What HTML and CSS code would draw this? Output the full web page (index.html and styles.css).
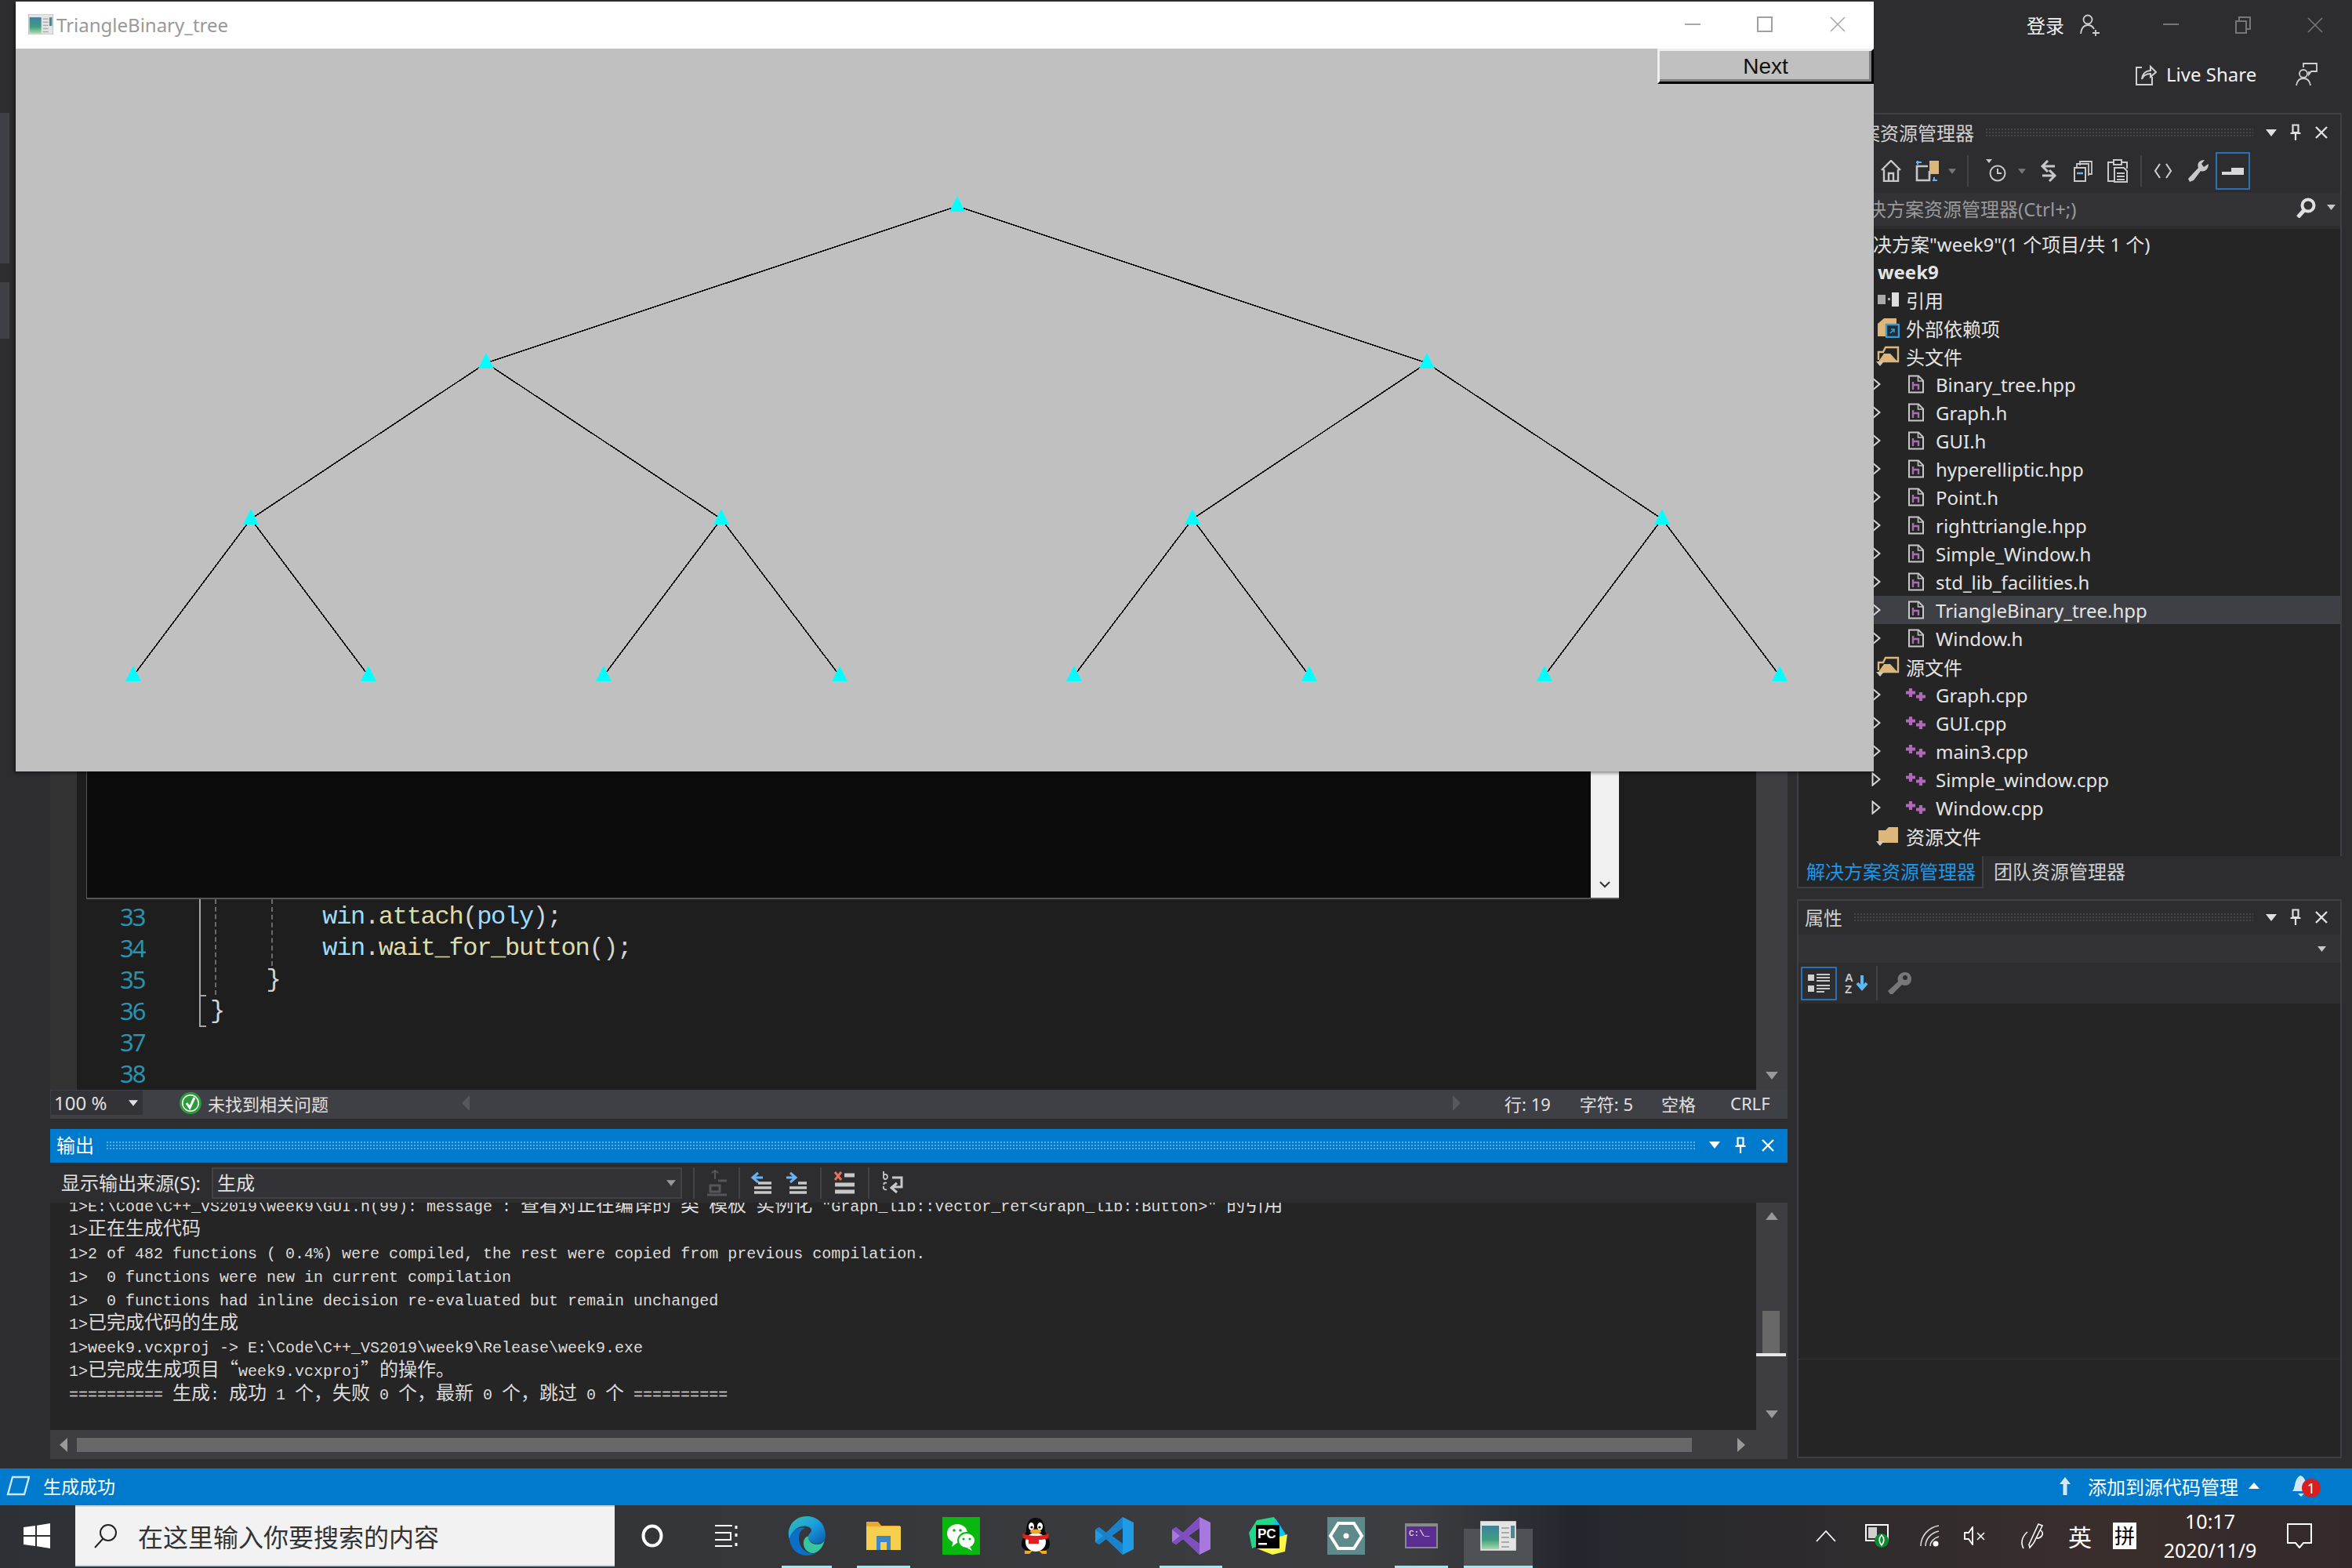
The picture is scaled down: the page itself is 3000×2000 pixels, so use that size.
FILE: index.html
```html
<!DOCTYPE html>
<html lang="zh-CN">
<head>
    <meta charset="UTF-8">
    <title>TriangleBinary_tree</title>
    <link rel="stylesheet" href="styles.css">
</head>
<body>
    <svg class="defs" width="0" height="0">
        <defs>
            <linearGradient id="appGrad" x1="0" y1="0" x2="0" y2="1">
                <stop offset="0" stop-color="#3f7f9f"/>
                <stop offset="0.6" stop-color="#3f9f80"/>
                <stop offset="1" stop-color="#a8d8a8"/>
            </linearGradient>
            <linearGradient id="edgeGrad" x1="0" y1="0" x2="1" y2="1">
                <stop offset="0" stop-color="#35c1a8"/>
                <stop offset="0.5" stop-color="#1b9de2"/>
                <stop offset="1" stop-color="#0c59a4"/>
            </linearGradient>
            <symbol id="appIcon" viewBox="0 0 46 38">
                <rect x="0" y="0" width="46" height="38" fill="#e4e4e4" stroke="#a8a8a8"/>
                <rect x="2" y="6" width="22" height="30" fill="url(#appGrad)"/>
                <rect x="27" y="8" width="10" height="2" fill="#aaa"/>
                <rect x="27" y="14" width="10" height="2" fill="#aaa"/>
                <rect x="27" y="20" width="10" height="2" fill="#aaa"/>
                <rect x="27" y="26" width="10" height="2" fill="#aaa"/>
                <rect x="27" y="32" width="10" height="2" fill="#aaa"/>
                <rect x="39" y="6" width="5" height="16" fill="#4a8a90"/>
            </symbol>
            <symbol id="fileH" viewBox="0 0 24 24">
                <path d="M3 1.5H15L21 7.5V22.5H3Z" fill="#252526" stroke="#c8c8c8" stroke-width="2"/>
                <path d="M14.5 2V8H21" fill="none" stroke="#c8c8c8" stroke-width="1.5"/>
                <path d="M8 9V19M8 13H15V19" fill="none" stroke="#a86fb0" stroke-width="2.4"/>
            </symbol>
            <symbol id="fileCpp" viewBox="0 0 26 16">
                <path d="M6 0V11M0 5.500H12" stroke="#b068b8" stroke-width="4.2" fill="none"/>
                <path d="M19 5V16M13 10.500H25" stroke="#b068b8" stroke-width="4.2" fill="none"/>
            </symbol>
            <symbol id="arrowOpen" viewBox="0 0 12 18">
                <path d="M1.5 1.5L10.5 9L1.5 16.5Z" fill="none" stroke="#d8d8d8" stroke-width="2"/>
            </symbol>
            <symbol id="folderOpen" viewBox="0 0 30 26">
                <path d="M3 18V8L9 8L12 2H28V20H6" fill="none" stroke="#dcb67a" stroke-width="2.4"/>
                <path d="M3 20L10 10H18L28 21H6Z" fill="#dcb67a"/>
                <path d="M0 20H10L5 26Z" fill="#c8c8c8"/>
            </symbol>
            <symbol id="folderClosed" viewBox="0 0 30 26">
                <path d="M3 6H12L16 2H28V22H3Z" fill="#dcb67a"/>
                <path d="M0 20H10L5 26Z" fill="#c8c8c8"/>
            </symbol>
            <symbol id="pin" viewBox="0 0 16 22">
                <path d="M4.5 1.5H11.5V11H4.5ZM1.5 12H14.5M8 12V21" fill="none" stroke="currentColor" stroke-width="2.2"/>
            </symbol>
            <symbol id="closeX" viewBox="0 0 18 18">
                <path d="M2 2L16 16M16 2L2 16" stroke="currentColor" stroke-width="2.4" fill="none"/>
            </symbol>
            <symbol id="triDown" viewBox="0 0 14 9">
                <path d="M0 0H14L7 9Z" fill="currentColor"/>
            </symbol>
        </defs>
    </svg>

    <div class="ide">
        <header class="ide-top">
            <div class="top-row">
                <span class="login">登录</span>
                <svg class="i-person" width="26" height="28" viewBox="0 0 26 28"><circle cx="10" cy="7" r="5.5" fill="none" stroke="#d0d0d0" stroke-width="1.8"/><path d="M1 25C2 16 6 14 10 14C13 14 16 15 18 19M20 20V28M16 24H25" fill="none" stroke="#d0d0d0" stroke-width="1.8"/></svg>
                <svg class="i-wmin" width="20" height="3" viewBox="0 0 20 3"><rect width="20" height="2" fill="#77777b"/></svg>
                <svg class="i-wrestore" width="20" height="22" viewBox="0 0 20 22"><path d="M1 6H14V21H1ZM5 6V1H19V16H14" fill="none" stroke="#77777b" stroke-width="2"/></svg>
                <svg class="i-wclose" width="20" height="20" viewBox="0 0 20 20"><path d="M1 1L19 19M19 1L1 19" stroke="#77777b" stroke-width="1.6" fill="none"/></svg>
            </div>
            <div class="top-row top-row-share">
                <svg class="i-share" width="28" height="28" viewBox="0 0 28 28"><path d="M9 5H2V27H22V17M9 20C10 12 15 9 20 9V4L27 11L20 17V13C15 13 11 15 9 20Z" fill="none" stroke="#d0d0d0" stroke-width="2"/></svg>
                <span class="share-text">Live Share</span>
                <svg class="i-feedback" width="28" height="30" viewBox="0 0 28 30"><circle cx="10" cy="14" r="5" fill="none" stroke="#d0d0d0" stroke-width="1.8"/><path d="M1 29C2 22 6 20 10 20C14 20 18 22 19 29M10 6V1H27V11H20L17 15V11" fill="none" stroke="#d0d0d0" stroke-width="1.8"/></svg>
            </div>
        </header>

        <div class="ide-main">
            <div class="left-strip">
                <div class="strip-tab strip-tab-long"></div>
                <div class="strip-tab strip-tab-short"></div>
            </div>

            <div class="center">
                <div class="editor">
                    <div class="gutter"></div>
                    <div class="code-col">
                        <div class="console">
                            <div class="console-scroll">
                                <svg width="14" height="9" viewBox="0 0 14 9"><path d="M1 1L7 7L13 1" fill="none" stroke="#333" stroke-width="2"/></svg>
                            </div>
                        </div>
                        <div class="code-lines">
                            <div class="guide guide-bar"></div>
                            <div class="guide guide-tick1"></div>
                            <div class="guide guide-tick2"></div>
                            <div class="guide guide-dash1"></div>
                            <div class="guide guide-dash2"></div>
                            <div class="line"><span class="ln">33</span><code>        <b class="v">win</b>.<b class="f">attach</b>(<b class="v">poly</b>);</code></div>
                            <div class="line"><span class="ln">34</span><code>        <b class="v">win</b>.<b class="f">wait_for_button</b>();</code></div>
                            <div class="line"><span class="ln">35</span><code>    }</code></div>
                            <div class="line"><span class="ln">36</span><code>}</code></div>
                            <div class="line"><span class="ln">37</span><code></code></div>
                            <div class="line"><span class="ln">38</span><code></code></div>
                        </div>
                    </div>
                    <div class="vscroll vscroll-editor">
                        <svg class="scroll-arrow" width="16" height="10"><use href="#triDown"/></svg>
                    </div>
                </div>

                <div class="editor-status">
                    <div class="zoom-box">100 %<svg class="zoom-caret" width="12" height="8"><use href="#triDown"/></svg></div>
                    <svg class="i-check" width="28" height="28" viewBox="0 0 28 28"><circle cx="14" cy="14" r="12.5" fill="#fff" stroke="#2f9a3a" stroke-width="3"/><circle cx="14" cy="14" r="9.5" fill="#2f9a3a"/><path d="M9 14L13 20L19 7" fill="none" stroke="#fff" stroke-width="3"/></svg>
                    <span class="no-issue">未找到相关问题</span>
                    <svg class="i-hleft" width="10" height="20" viewBox="0 0 10 20"><path d="M10 0V20L0 10Z" fill="#58585c"/></svg>
                    <svg class="i-hright" width="10" height="20" viewBox="0 0 10 20"><path d="M0 0V20L10 10Z" fill="#58585c"/></svg>
                    <span class="st st-line">行: 19</span>
                    <span class="st st-char">字符: 5</span>
                    <span class="st st-space">空格</span>
                    <span class="st st-crlf">CRLF</span>
                </div>

                <section class="output">
                    <div class="output-head">
                        <span class="output-title">输出</span>
                        <div class="dots dots-blue"></div>
                        <svg class="head-tri" width="14" height="9"><use href="#triDown"/></svg>
                        <svg class="head-pin" width="16" height="22"><use href="#pin"/></svg>
                        <svg class="head-x" width="18" height="18"><use href="#closeX"/></svg>
                    </div>
                    <div class="output-tools">
                        <span class="src-label">显示输出来源(S):</span>
                        <div class="src-combo">生成<svg class="src-caret" width="12" height="8"><use href="#triDown"/></svg></div>
                        <div class="tsep tsep-a"></div>
                        <svg class="ot ot-1" width="28" height="34" viewBox="0 0 28 34"><path d="M12 1V12M8 4L12 1L16 4" fill="none" stroke="#55555a" stroke-width="2"/><path d="M16 14H27M6 20H18V28H6ZM2 32H27" fill="none" stroke="#55555a" stroke-width="3"/></svg>
                        <div class="tsep tsep-b"></div>
                        <svg class="ot ot-2" width="28" height="30" viewBox="0 0 28 30"><path d="M10 2L3 8L10 14M3 8H16" fill="none" stroke="#6cb2f0" stroke-width="3"/><path d="M10 15H27M5 21H27M5 27H27" stroke="#c8c8c8" stroke-width="3.4"/></svg>
                        <svg class="ot ot-3" width="28" height="30" viewBox="0 0 28 30"><path d="M6 2L13 8L6 14M13 8H1" fill="none" stroke="#6cb2f0" stroke-width="3"/><path d="M16 15H27M5 21H27M5 27H27" stroke="#c8c8c8" stroke-width="3.4"/></svg>
                        <div class="tsep tsep-c"></div>
                        <svg class="ot ot-4" width="28" height="32" viewBox="0 0 28 32"><path d="M2 2L10 12M10 2L2 12" stroke="#e07060" stroke-width="3"/><path d="M14 6H27M2 18H27M2 27H27" stroke="#c8c8c8" stroke-width="5"/></svg>
                        <div class="tsep tsep-d"></div>
                        <svg class="ot ot-5" width="30" height="32" viewBox="0 0 30 32"><path d="M3 1V10M3 6C5 4 8 5 8 8C8 11 5 12 3 10M4 18C2 16 5 15 7 16M7 24C5 25 2 24 3 20" fill="none" stroke="#c8c8c8" stroke-width="1.8"/><path d="M14 9H26V21H14M20 16L13 22L20 28" fill="none" stroke="#c8c8c8" stroke-width="3"/></svg>
                    </div>
                    <div class="output-body">
                        <div class="output-text">
                            <div class="out-cut">
<div class="oline">1&gt;E:\Code\C++_VS2019\week9\GUI.h(99): message : <i>查看对正在编译的</i> <i>类</i> <i>模板</i> <i>实例化</i> "Graph_lib::Vector_ref&lt;Graph_lib::Button&gt;" <i>的引用</i></div>
<div class="oline">1&gt;<i>正在生成代码</i></div>
<div class="oline">1&gt;2 of 482 functions ( 0.4%) were compiled, the rest were copied from previous compilation.</div>
<div class="oline">1&gt;  0 functions were new in current compilation</div>
<div class="oline">1&gt;  0 functions had inline decision re-evaluated but remain unchanged</div>
<div class="oline">1&gt;<i>已完成代码的生成</i></div>
<div class="oline">1&gt;week9.vcxproj -&gt; E:\Code\C++_VS2019\week9\Release\week9.exe</div>
<div class="oline">1&gt;<i>已完成生成项目“</i>week9.vcxproj<i>”的操作。</i></div>
<div class="oline">========== <i>生成</i>: <i>成功</i> 1 <i>个，失败</i> 0 <i>个，最新</i> 0 <i>个，跳过</i> 0 <i>个</i> ==========</div>
                            </div>
                        </div>
                        <div class="vscroll vscroll-output">
                            <svg class="scroll-up" width="16" height="10"><use href="#triDown"/></svg>
                            <div class="vthumb"></div>
                            <div class="vthumb-line"></div>
                            <svg class="scroll-down" width="16" height="10"><use href="#triDown"/></svg>
                        </div>
                    </div>
                    <div class="hscroll">
                        <svg class="hs-left" width="10" height="18" viewBox="0 0 10 18"><path d="M10 0V18L0 9Z" fill="#999"/></svg>
                        <div class="hthumb"></div>
                        <svg class="hs-right" width="10" height="18" viewBox="0 0 10 18"><path d="M0 0V18L10 9Z" fill="#999"/></svg>
                    </div>
                </section>
            </div>

            <aside class="side">
                <section class="panel panel-tree">
                    <div class="panel-head">
                        <span class="panel-title panel-title-tree">解决方案资源管理器</span>
                        <div class="dots dots-gray"></div>
                        <svg class="head-tri" width="14" height="9"><use href="#triDown"/></svg>
                        <svg class="head-pin" width="16" height="22"><use href="#pin"/></svg>
                        <svg class="head-x" width="18" height="18"><use href="#closeX"/></svg>
                    </div>
                    <div class="tree-tools">
                        <svg class="tb tb-home" width="26" height="28" viewBox="0 0 26 28"><path d="M1 13L13 1L25 13M4 12V27H22V12M10 27V17H16V27" fill="none" stroke="#c8c8c8" stroke-width="2.4"/></svg>
                        <svg class="tb tb-sync" width="30" height="28" viewBox="0 0 30 28"><path d="M16 8H2V26H18V14" fill="none" stroke="#c8c8c8" stroke-width="2.6"/><path d="M18 1H30V18H18Z" fill="#dcb67a"/><path d="M3 6V1M1 3H8" stroke="#6cb2f0" stroke-width="2"/><path d="M24 22V27M22 26H28" stroke="#6cb2f0" stroke-width="2"/></svg>
                        <svg class="tb tb-drop1" width="10" height="7" color="#77777b"><use href="#triDown"/></svg>
                        <div class="tb-sep tb-sep1"></div>
                        <svg class="tb tb-clock" width="28" height="30" viewBox="0 0 28 30"><path d="M0 0H8L4 5Z" fill="#c8c8c8"/><circle cx="15" cy="18" r="9.5" fill="none" stroke="#c8c8c8" stroke-width="2"/><path d="M15 12V18H20" fill="none" stroke="#c8c8c8" stroke-width="2"/></svg>
                        <svg class="tb tb-drop2" width="10" height="7" color="#77777b"><use href="#triDown"/></svg>
                        <svg class="tb tb-arrows" width="24" height="28" viewBox="0 0 24 28"><path d="M11 1L4 8L11 15M4 8H20M13 13L20 20L13 27M20 20H4" fill="none" stroke="#c8c8c8" stroke-width="3"/></svg>
                        <svg class="tb tb-copy" width="24" height="28" viewBox="0 0 24 28"><path d="M8 7V2H23V18H19M4 9V5H19V20" fill="none" stroke="#c8c8c8" stroke-width="1.8"/><path d="M1 10H15V27H1Z" fill="#252526" stroke="#c8c8c8" stroke-width="2"/><path d="M4 17H12" stroke="#6cb2f0" stroke-width="2.5"/></svg>
                        <svg class="tb tb-doc" width="28" height="30" viewBox="0 0 28 30"><path d="M8 4H2V28H12M20 4H26V12" fill="none" stroke="#c8c8c8" stroke-width="2"/><path d="M9 1H19V7H9ZM10 11H22L26 15V29H10Z" fill="#252526" stroke="#c8c8c8" stroke-width="2"/><path d="M13 18H23M13 22H23M13 26H23" stroke="#c8c8c8" stroke-width="2"/></svg>
                        <div class="tb-sep tb-sep2"></div>
                        <svg class="tb tb-code" width="24" height="22" viewBox="0 0 24 22"><path d="M8 2L2 11L8 20M16 2L22 11L16 20" fill="none" stroke="#c8c8c8" stroke-width="2.2"/></svg>
                        <svg class="tb tb-wrench" width="28" height="30" viewBox="0 0 28 30"><path d="M3 29L1 25L14 11C12 6 15 1 22 1L18 6L21 10L27 6C27 13 22 17 17 15L8 27Z" fill="#c8c8c8"/></svg>
                        <div class="tb-focus"><svg width="28" height="9" viewBox="0 0 28 9"><path d="M0 5H12V0H28V9H0Z" fill="#d8d8d8"/></svg></div>
                    </div>
                    <div class="tree-search">
                        <span class="search-hint">搜索解决方案资源管理器(Ctrl+;)</span>
                        <svg class="i-find" width="28" height="26" viewBox="0 0 28 26"><circle cx="16" cy="10" r="7.5" fill="none" stroke="#e0e0e0" stroke-width="4"/><path d="M11 16L3 25" stroke="#e0e0e0" stroke-width="5"/></svg>
                        <svg class="find-drop" width="11" height="7" color="#c8c8c8"><use href="#triDown"/></svg>
                    </div>
                    <div class="tree">
                        <div class="row row-solution">解决方案"week9"(1 个项目/共 1 个)</div>
                        <div class="row row-project">week9</div>
                        <div class="row row-folder"><svg class="ficon" width="30" height="22" viewBox="0 0 30 22"><rect x="2" y="5" width="10" height="12" fill="#aaa"/><rect x="15" y="9" width="3" height="3" fill="#aaa"/><rect x="20" y="2" width="9" height="18" fill="#ddd"/></svg><span>引用</span></div>
                        <div class="row row-folder"><svg class="ficon" width="30" height="26" viewBox="0 0 30 26"><path d="M2 8L10 1H26V24H2Z" fill="#dcb67a"/><rect x="13" y="9" width="16" height="16" fill="#1f2f3a" stroke="#3a9bd8" stroke-width="2.4"/><path d="M18 20L23 15M19 15H23V19" stroke="#3a9bd8" stroke-width="1.6" fill="none"/></svg><span>外部依赖项</span></div>
                        <div class="row row-folder"><svg class="ficon" width="30" height="26"><use href="#folderOpen"/></svg><span>头文件</span></div>
                        <div class="row row-file"><svg class="tw" width="12" height="18"><use href="#arrowOpen"/></svg><svg class="fi" width="24" height="24"><use href="#fileH"/></svg><span>Binary_tree.hpp</span></div>
                        <div class="row row-file"><svg class="tw" width="12" height="18"><use href="#arrowOpen"/></svg><svg class="fi" width="24" height="24"><use href="#fileH"/></svg><span>Graph.h</span></div>
                        <div class="row row-file"><svg class="tw" width="12" height="18"><use href="#arrowOpen"/></svg><svg class="fi" width="24" height="24"><use href="#fileH"/></svg><span>GUI.h</span></div>
                        <div class="row row-file"><svg class="tw" width="12" height="18"><use href="#arrowOpen"/></svg><svg class="fi" width="24" height="24"><use href="#fileH"/></svg><span>hyperelliptic.hpp</span></div>
                        <div class="row row-file"><svg class="tw" width="12" height="18"><use href="#arrowOpen"/></svg><svg class="fi" width="24" height="24"><use href="#fileH"/></svg><span>Point.h</span></div>
                        <div class="row row-file"><svg class="tw" width="12" height="18"><use href="#arrowOpen"/></svg><svg class="fi" width="24" height="24"><use href="#fileH"/></svg><span>righttriangle.hpp</span></div>
                        <div class="row row-file"><svg class="tw" width="12" height="18"><use href="#arrowOpen"/></svg><svg class="fi" width="24" height="24"><use href="#fileH"/></svg><span>Simple_Window.h</span></div>
                        <div class="row row-file"><svg class="tw" width="12" height="18"><use href="#arrowOpen"/></svg><svg class="fi" width="24" height="24"><use href="#fileH"/></svg><span>std_lib_facilities.h</span></div>
                        <div class="row row-file row-active"><svg class="tw" width="12" height="18"><use href="#arrowOpen"/></svg><svg class="fi" width="24" height="24"><use href="#fileH"/></svg><span>TriangleBinary_tree.hpp</span></div>
                        <div class="row row-file"><svg class="tw" width="12" height="18"><use href="#arrowOpen"/></svg><svg class="fi" width="24" height="24"><use href="#fileH"/></svg><span>Window.h</span></div>
                        <div class="row row-folder"><svg class="ficon" width="30" height="26"><use href="#folderOpen"/></svg><span>源文件</span></div>
                        <div class="row row-file"><svg class="tw" width="12" height="18"><use href="#arrowOpen"/></svg><svg class="fi fi-cpp" width="26" height="16"><use href="#fileCpp"/></svg><span>Graph.cpp</span></div>
                        <div class="row row-file"><svg class="tw" width="12" height="18"><use href="#arrowOpen"/></svg><svg class="fi fi-cpp" width="26" height="16"><use href="#fileCpp"/></svg><span>GUI.cpp</span></div>
                        <div class="row row-file"><svg class="tw" width="12" height="18"><use href="#arrowOpen"/></svg><svg class="fi fi-cpp" width="26" height="16"><use href="#fileCpp"/></svg><span>main3.cpp</span></div>
                        <div class="row row-file"><svg class="tw" width="12" height="18"><use href="#arrowOpen"/></svg><svg class="fi fi-cpp" width="26" height="16"><use href="#fileCpp"/></svg><span>Simple_window.cpp</span></div>
                        <div class="row row-file"><svg class="tw" width="12" height="18"><use href="#arrowOpen"/></svg><svg class="fi fi-cpp" width="26" height="16"><use href="#fileCpp"/></svg><span>Window.cpp</span></div>
                        <div class="row row-folder"><svg class="ficon" width="30" height="26"><use href="#folderClosed"/></svg><span>资源文件</span></div>
                    </div>
                </section>
                <div class="side-tabs">
                    <span class="side-tab side-tab-on">解决方案资源管理器</span>
                    <span class="side-tab">团队资源管理器</span>
                </div>

                <section class="panel panel-props">
                    <div class="panel-head panel-head-props">
                        <span class="panel-title">属性</span>
                        <div class="dots dots-gray"></div>
                        <svg class="head-tri" width="14" height="9"><use href="#triDown"/></svg>
                        <svg class="head-pin" width="16" height="22"><use href="#pin"/></svg>
                        <svg class="head-x" width="18" height="18"><use href="#closeX"/></svg>
                    </div>
                    <div class="props-combo"><svg width="11" height="7" color="#c8c8c8"><use href="#triDown"/></svg></div>
                    <div class="props-tools">
                        <div class="pt-on">
                            <svg width="30" height="26" viewBox="0 0 30 26"><rect x="1" y="2" width="8" height="8" fill="#d0d0d0"/><rect x="1" y="16" width="8" height="8" fill="#d0d0d0"/><path d="M12 2H29M12 6H29M12 10H29M12 16H29M12 20H29M12 24H22" stroke="#c8c8c8" stroke-width="1.8"/></svg>
                        </div>
                        <svg class="pt-az" width="30" height="28" viewBox="0 0 30 28"><text x="0" y="12" class="az-text">A</text><text x="0" y="27" class="az-text">Z</text><path d="M22 4V20M16 14L22 21L28 14" fill="none" stroke="#5cb8f5" stroke-width="4"/></svg>
                        <div class="tb-sep pt-sep"></div>
                        <svg class="pt-key" width="32" height="30" viewBox="0 0 32 30"><path d="M4 29L1 25L14 13C12 6 17 1 23 1C28 1 31 5 31 10C31 16 25 20 19 17L7 29Z" fill="#77777b"/><circle cx="23" cy="8" r="3" fill="#2d2d30"/></svg>
                    </div>
                    <div class="props-grid"></div>
                    <div class="props-desc"></div>
                </section>
            </aside>
        </div>

        <div class="statusbar">
            <svg class="i-build" width="30" height="26" viewBox="0 0 30 26"><path d="M8 2H29L23 24H2Z" fill="none" stroke="#cfe8f8" stroke-width="2.4"/></svg>
            <span class="build-ok">生成成功</span>
            <svg class="i-up" width="16" height="24" viewBox="0 0 16 24"><path d="M8 1L15 10H10.5V24H5.5V10H1Z" fill="#d5e8f5"/></svg>
            <span class="scm">添加到源代码管理</span>
            <svg class="scm-tri" width="14" height="8" viewBox="0 0 14 8"><path d="M0 8H14L7 0Z" fill="#fff"/></svg>
            <div class="bell">
                <svg width="26" height="30" viewBox="0 0 26 30"><path d="M2 22C6 18 4 6 12 2C20 4 19 16 24 22ZM9 25H17L13 29Z" fill="#d5e8f5"/></svg>
                <span class="bell-badge">1</span>
            </div>
        </div>
    </div>

    <footer class="taskbar">
        <svg class="tk-start" width="34" height="32" viewBox="0 0 34 32"><path d="M0 5L15 3V15H0ZM17 2.7L34 0V15H17ZM0 17H15V29L0 27ZM17 17H34V32L17 29.3Z" fill="#fff"/></svg>
        <div class="tk-search">
            <svg width="30" height="32" viewBox="0 0 30 32"><circle cx="18" cy="12" r="10" fill="none" stroke="#222" stroke-width="2"/><path d="M11 20L1 31" stroke="#222" stroke-width="2"/></svg>
            <span>在这里输入你要搜索的内容</span>
        </div>
        <svg class="tk-cortana" width="28" height="30" viewBox="0 0 28 30"><ellipse cx="14" cy="15" rx="11.5" ry="12.5" fill="none" stroke="#fff" stroke-width="4"/></svg>
        <svg class="tk-view" width="30" height="30" viewBox="0 0 30 30"><path d="M0 2H22M0 28H22M0 11H20V20H0" fill="none" stroke="#fff" stroke-width="2"/><path d="M27 2V6M27 12V16M27 24V28" stroke="#fff" stroke-width="3"/></svg>
        <div class="tk-app tk-edge tk-open">
            <svg width="48" height="50" viewBox="0 0 48 50"><path d="M24 0C38 0 48 10 48 25C48 30 44 35 38 35C30 35 26 31 26 26C26 22 30 21 30 18C30 13 20 10 12 15C6 19 3 25 2 30C-3 14 8 0 24 0Z" fill="url(#edgeGrad)"/><path d="M2 30C4 18 14 13 22 15C14 18 12 28 16 37C19 44 27 49 35 47C30 50 25 50 22 50C11 49 4 41 2 30Z" fill="#0c6ec4"/><path d="M26 26C26 33 32 36 38 36C42 36 46 33 47 30C45 40 38 47 32 47C24 47 19 40 20 32C21 28 24 25 26 26Z" fill="#38c6a0"/></svg>
        </div>
        <div class="tk-app tk-files tk-open">
            <svg width="46" height="36" viewBox="0 0 46 36"><path d="M1 0H16L20 5H44V36H1Z" fill="#e9a92c"/><rect x="1" y="6" width="44" height="30" fill="#f6cf4e"/><rect x="14" y="18" width="18" height="18" fill="#3d87c8"/><rect x="19" y="26" width="8" height="10" fill="#f6cf4e"/></svg>
        </div>
        <div class="tk-app tk-wechat">
            <svg width="48" height="48" viewBox="0 0 48 48"><rect width="48" height="48" fill="#09b80f"/><ellipse cx="19" cy="21" rx="13" ry="12" fill="#fff"/><path d="M14 30L12 38L20 32Z" fill="#fff"/><ellipse cx="31" cy="30" rx="11" ry="10" fill="#fff" stroke="#09b80f" stroke-width="2"/><path d="M35 38L38 43L31 39Z" fill="#fff"/><circle cx="15" cy="17" r="1.8" fill="#09b80f"/><circle cx="23" cy="17" r="1.8" fill="#09b80f"/><circle cx="27" cy="28" r="1.6" fill="#09b80f"/><circle cx="35" cy="28" r="1.6" fill="#09b80f"/></svg>
        </div>
        <div class="tk-app tk-qq">
            <svg width="40" height="46" viewBox="0 0 40 46"><path d="M20 0C30 0 32 10 32 18C36 24 40 32 37 38C34 44 6 44 3 38C0 32 4 24 8 18C8 10 10 0 20 0Z" fill="#0a0a0a"/><ellipse cx="20" cy="31" rx="13" ry="12" fill="#fff"/><ellipse cx="14.500" cy="11" rx="3.5" ry="5" fill="#fff"/><ellipse cx="25.500" cy="11" rx="3.5" ry="5" fill="#fff"/><circle cx="15" cy="12" r="1.6" fill="#000"/><circle cx="25" cy="12" r="1.6" fill="#000"/><ellipse cx="20" cy="17.500" rx="7" ry="3" fill="#f2a81d"/><path d="M3 20C12 24 28 24 37 20L36 26C30 28 26 28 24 28V33H11V28C8 27 5 27 4 26Z" fill="#e01f1f"/><path d="M6 42H16L12 46H6ZM24 42H34V46H28Z" fill="#f2a81d"/></svg>
        </div>
        <div class="tk-app tk-code">
            <svg width="49" height="48" viewBox="0 0 49 48"><path d="M35 0L49 7V41L35 48L14 28L5 35L0 32V16L5 13L14 20ZM35 14L21 24L35 34Z" fill="#1f9ce8" fill-rule="evenodd"/><path d="M35 0V14L21 24L35 34V48L14 28L5 35L0 32L10 24L0 16L5 13L14 20Z" fill="#1a82c8"/></svg>
        </div>
        <div class="tk-app tk-vs tk-open">
            <svg width="49" height="48" viewBox="0 0 49 48"><path d="M35 0L49 7V41L35 48L14 28L5 35L0 32V16L5 13L14 20ZM35 14L21 24L35 34Z" fill="#a678e0" fill-rule="evenodd"/><path d="M35 0V14L21 24L35 34V48L14 28L5 35L0 32L10 24L0 16L5 13L14 20Z" fill="#7f4fc0"/></svg>
        </div>
        <div class="tk-app tk-py">
            <svg width="49" height="48" viewBox="0 0 49 48"><path d="M10 4L32 0L36 6L30 30L4 40L0 20Z" fill="#21d789"/><path d="M34 2L47 22L40 32L28 20Z" fill="#07c3f2"/><path d="M10 40L30 28L49 22L46 44L30 48Z" fill="#fcf84a"/><rect x="9" y="10" width="30" height="30" fill="#000"/><text x="11" y="27" class="pc-text">PC</text><rect x="12" y="33" width="11" height="2.500" fill="#fff"/></svg>
        </div>
        <div class="tk-app tk-hex">
            <svg width="48" height="48" viewBox="0 0 48 48"><rect width="48" height="48" fill="#5f8a8b"/><path d="M14 8H34L44 24L34 40H14L4 24Z" fill="none" stroke="#fff" stroke-width="4"/><circle cx="24" cy="24" r="3.5" fill="#fff"/></svg>
        </div>
        <div class="tk-app tk-cmd tk-open">
            <svg width="42" height="32" viewBox="0 0 42 32"><rect width="42" height="32" fill="#8a8a8a"/><rect x="2" y="4" width="38" height="26" fill="#5a2d91"/><text x="5" y="16" class="cmd-text">C:\_</text></svg>
        </div>
        <div class="tk-app tk-win tk-open tk-active">
            <svg class="tk-thumb" width="46" height="38"><use href="#appIcon"/></svg>
        </div>

        <div class="tray">
            <svg class="tr tr-up" width="26" height="16" viewBox="0 0 26 16"><path d="M1 15L13 2L25 15" fill="none" stroke="#fff" stroke-width="1.8"/></svg>
            <svg class="tr tr-bat" width="32" height="30" viewBox="0 0 32 30"><rect x="1" y="1" width="28" height="20" fill="none" stroke="#fff" stroke-width="2"/><rect x="4" y="4" width="11" height="14" fill="#d0d0d0"/><circle cx="21" cy="21" r="9" fill="#0f8a2f"/><path d="M21 14C25 18 25 22 21 27C17 22 17 18 21 14Z" fill="none" stroke="#fff" stroke-width="1.6"/></svg>
            <svg class="tr tr-wifi" width="26" height="28" viewBox="0 0 26 28"><path d="M2 27C2 14 12 3 25 1M8 27C8 18 15 10 25 8M14 27C14 22 18 17 25 15" fill="none" stroke="#d8d8d8" stroke-width="1.6"/><circle cx="21" cy="24" r="3.500" fill="#fff"/></svg>
            <svg class="tr tr-vol" width="28" height="24" viewBox="0 0 28 24"><path d="M1 8H6L11 1V23L6 16H1Z" fill="none" stroke="#fff" stroke-width="1.8"/><path d="M17 8L26 17M26 8L17 17" stroke="#fff" stroke-width="1.6"/></svg>
            <svg class="tr tr-pen" width="32" height="34" viewBox="0 0 32 34"><path d="M12 28L24 2L29 4L18 26L13 32ZM27 10C32 14 28 20 22 20M10 12C3 18 1 26 5 33" fill="none" stroke="#fff" stroke-width="1.6"/></svg>
            <span class="tr-en">英</span>
            <span class="tr-pin">拼</span>
            <div class="clock"><span>10:17</span><span>2020/11/9</span></div>
            <svg class="tr tr-note" width="34" height="32" viewBox="0 0 34 32"><path d="M2 1H32V25H22L17 31L12 25H2Z" fill="none" stroke="#fff" stroke-width="2"/></svg>
        </div>
    </footer>

    <!-- the running program's window, sits over the IDE -->
    <div class="app-window">
        <div class="win-title">
            <svg class="win-icon" width="32" height="26"><use href="#appIcon"/></svg>
            <span class="win-name">TriangleBinary_tree</span>
            <svg class="wb wb-min" width="20" height="2" viewBox="0 0 20 2"><rect width="20" height="2" fill="#a8a8a8"/></svg>
            <svg class="wb wb-max" width="20" height="20" viewBox="0 0 20 20"><rect x="1" y="1" width="18" height="18" fill="none" stroke="#a0a0a0" stroke-width="2"/></svg>
            <svg class="wb wb-close" width="20" height="20" viewBox="0 0 20 20"><path d="M1 1L19 19M19 1L1 19" stroke="#a8a8a8" stroke-width="1.6" fill="none"/></svg>
        </div>
        <div class="canvas">
            <button class="next-btn">Next</button>
            <svg class="tree-draw" viewBox="20 62 2370 922">
                <g class="edges">
                    <line x1="1221" y1="263" x2="620" y2="463"/>
                    <line x1="1221" y1="263" x2="1820" y2="463"/>
                    <line x1="620" y1="463" x2="320" y2="662"/>
                    <line x1="620" y1="463" x2="920" y2="662"/>
                    <line x1="1820" y1="463" x2="1521" y2="662"/>
                    <line x1="1820" y1="463" x2="2120" y2="662"/>
                    <line x1="320" y1="662" x2="170" y2="862"/>
                    <line x1="320" y1="662" x2="470" y2="862"/>
                    <line x1="920" y1="662" x2="770" y2="862"/>
                    <line x1="920" y1="662" x2="1071" y2="862"/>
                    <line x1="1521" y1="662" x2="1370" y2="862"/>
                    <line x1="1521" y1="662" x2="1670" y2="862"/>
                    <line x1="2120" y1="662" x2="1970" y2="862"/>
                    <line x1="2120" y1="662" x2="2270" y2="862"/>
                </g>
                <g class="nodes">
                    <polygon points="1221,250 1211,270 1231,270"/>
                    <polygon points="620,450 610,470 630,470"/>
                    <polygon points="1820,450 1810,470 1830,470"/>
                    <polygon points="320,649 310,669 330,669"/>
                    <polygon points="920,649 910,669 930,669"/>
                    <polygon points="1521,649 1511,669 1531,669"/>
                    <polygon points="2120,649 2110,669 2130,669"/>
                    <polygon points="170,849 160,869 180,869"/>
                    <polygon points="470,849 460,869 480,869"/>
                    <polygon points="770,849 760,869 780,869"/>
                    <polygon points="1071,849 1061,869 1081,869"/>
                    <polygon points="1370,849 1360,869 1380,869"/>
                    <polygon points="1670,849 1660,869 1680,869"/>
                    <polygon points="1970,849 1960,869 1980,869"/>
                    <polygon points="2270,849 2260,869 2280,869"/>
                </g>
            </svg>
        </div>
    </div>
</body>
</html>
```

FILE: styles.css
```css
* {
    box-sizing: border-box;
}

body {
    margin: 0;
    width: 3000px;
    height: 2000px;
    overflow: hidden;
    position: relative;
    background-color: #2d2d30;
    color: #e0e0e0;
    font-family: "Noto Sans", "Noto Sans CJK SC", sans-serif;
    font-size: 24px;
}

svg {
    display: block;
    flex: none;
}

.defs {
    position: absolute;
}

/* ---------- IDE frame ---------- */

.ide {
    height: 1920px;
    display: flex;
    flex-direction: column;
}

.ide-top {
    height: 144px;
}

.top-row {
    height: 66px;
    display: flex;
    align-items: center;
    padding-left: 2585px;
    padding-bottom: 3px;
}

.top-row-share {
    height: 60px;
    padding-left: 2723px;
}

.login {
    width: 66px;
    color: #f1f1f1;
}

.i-person { margin-left: 2px; }
.i-wmin { margin-left: 80px; }
.i-wrestore { margin-left: 72px; }
.i-wclose { margin-left: 72px; }

.share-text {
    margin-left: 12px;
    color: #f1f1f1;
}

.i-feedback { margin-left: 50px; }

.ide-main {
    height: 1729px;
    display: flex;
}

.left-strip {
    width: 64px;
    flex: none;
}

.strip-tab {
    width: 12px;
    background-color: #3f3f46;
}

.strip-tab-long { height: 192px; }
.strip-tab-short { height: 72px; margin-top: 24px; }

.center {
    width: 2216px;
    flex: none;
    display: flex;
    flex-direction: column;
}

/* ---------- editor ---------- */

.editor {
    height: 1246px;
    display: flex;
}

.gutter {
    width: 34px;
    background-color: #333333;
}

.code-col {
    width: 2142px;
    background-color: #1e1e1e;
}

.console {
    height: 1003px;
    width: 1955px;
    margin-left: 12px;
    background-color: #0c0c0c;
    border-left: 1px solid #555;
    border-bottom: 2px solid #555;
    display: flex;
    justify-content: flex-end;
}

.console-scroll {
    width: 36px;
    background-color: #f0f0f0;
    display: flex;
    flex-direction: column;
    justify-content: flex-end;
    align-items: center;
    padding-bottom: 12px;
}

.code-lines {
    position: relative;
    padding-top: 2px;
}

.line {
    height: 40px;
    display: flex;
    align-items: center;
}

.ln {
    margin-left: 55px;
    width: 35px;
    color: #2b91af;
    font-size: 31px;
    line-height: 40px;
    letter-spacing: -2px;
}

code {
    margin-left: 80px;
    font-family: "Liberation Mono", monospace;
    font-size: 32px;
    letter-spacing: -1.3px;
    white-space: pre;
    color: #d4d4d4;
}

code b {
    font-weight: normal;
}

.v { color: #9cdcfe; }
.f { color: #dcdcaa; }

.guide {
    position: absolute;
}

.guide-bar {
    left: 156px;
    top: 0;
    width: 2px;
    height: 163px;
    background-color: #a5a5a5;
}

.guide-tick1,
.guide-tick2 {
    left: 156px;
    width: 9px;
    height: 2px;
    background-color: #a5a5a5;
}

.guide-tick1 { top: 122px; }
.guide-tick2 { top: 161px; }

.guide-dash1,
.guide-dash2 {
    top: 0;
    width: 0;
    border-left: 2px dashed #6a6a6a;
}

.guide-dash1 { left: 176px; height: 122px; }
.guide-dash2 { left: 248px; height: 85px; }

.vscroll {
    width: 40px;
    background-color: #3e3e42;
    position: relative;
}

.vscroll svg {
    color: #999;
    position: absolute;
    left: 12px;
}

.scroll-arrow { top: 1223px; }

/* ---------- editor status row ---------- */

.editor-status {
    height: 37px;
    padding-bottom: 4px;
    background-color: #3f3f46;
    display: flex;
    align-items: center;
    font-size: 22px;
}

.zoom-box {
    width: 117px;
    height: 31px;
    margin-left: 1px;
    padding-left: 4px;
    line-height: 31px;
    font-size: 24px;
    background-color: #333337;
    display: flex;
    align-items: center;
}

.zoom-caret {
    color: #e0e0e0;
    margin-left: 28px;
}

.i-check { margin-left: 47px; }

.no-issue { margin-left: 8px; }

.i-hleft { margin-left: 170px; }
.i-hright { margin-left: 1254px; }

.st-line { margin-left: 56px; }
.st-char { margin-left: 37px; }
.st-space { margin-left: 36px; }
.st-crlf { margin-left: 44px; }

/* ---------- output panel ---------- */

.output {
    margin-top: 13px;
    height: 421px;
    display: flex;
    flex-direction: column;
}

.output-head {
    height: 43px;
    padding-bottom: 2px;
    background-color: #007acc;
    display: flex;
    align-items: center;
    padding-left: 8px;
    color: #fff;
}

.output-title {
    padding-bottom: 3px;
}

.dots {
    height: 12px;
    background-size: 4px 4px;
}

.dots-blue {
    width: 2028px;
    margin-left: 15px;
    background-image: radial-gradient(#5aaee0 1px, transparent 1.2px);
}

.dots-gray {
    background-image: radial-gradient(#46464a 1px, transparent 1.2px);
}

.head-tri { margin-left: 17px; }
.head-pin { margin-left: 18px; }
.head-x { margin-left: 18px; }

.output-tools {
    height: 51px;
    display: flex;
    align-items: center;
    padding-left: 14px;
}

.src-label {
    width: 192px;
    padding-bottom: 3px;
    white-space: nowrap;
}

.src-combo {
    width: 600px;
    height: 40px;
    background-color: #333337;
    border: 2px solid #434346;
    padding-left: 5px;
    line-height: 34px;
    display: flex;
    align-items: center;
    position: relative;
}

.src-caret {
    color: #999;
    position: absolute;
    right: 6px;
}

.tsep {
    width: 2px;
    height: 40px;
    background-color: #434346;
}

.tsep-a { margin-left: 14px; }
.tsep-b { margin-left: 14px; }
.tsep-c { margin-left: 16px; }
.tsep-d { margin-left: 16px; }

.ot-1 { margin-left: 14px; }
.ot-2 { margin-left: 13px; }
.ot-3 { margin-left: 17px; }
.ot-4 { margin-left: 15px; }
.ot-5 { margin-left: 15px; }

.output-body {
    height: 290px;
    display: flex;
}

.output-text {
    width: 2176px;
    background-color: #252526;
    overflow: hidden;
    padding-left: 24px;
}

.out-cut {
    margin-top: -9px;
}

.oline {
    height: 30px;
    line-height: 30px;
    font-family: "Liberation Mono", monospace;
    font-size: 20px;
    white-space: pre;
    color: #dcdcdc;
}

.oline i {
    font-style: normal;
    font-family: "Noto Sans CJK SC", sans-serif;
    font-size: 24px;
    line-height: 20px;
}

.scroll-up {
    top: 12px;
    transform: rotate(180deg);
}

.scroll-down { top: 265px; }

.vthumb {
    position: absolute;
    left: 8px;
    top: 138px;
    width: 22px;
    height: 54px;
    background-color: #686868;
}

.vthumb-line {
    position: absolute;
    left: 0;
    top: 192px;
    width: 38px;
    height: 4px;
    background-color: #e8e8e8;
}

.hscroll {
    height: 37px;
    background-color: #3e3e42;
    display: flex;
    align-items: center;
    padding-left: 12px;
}

.hthumb {
    width: 2060px;
    height: 18px;
    margin-left: 12px;
    background-color: #686868;
}

.hs-right { margin-left: 58px; }

/* ---------- right column ---------- */

.side {
    width: 695px;
    flex: none;
    margin-left: 12px;
    display: flex;
    flex-direction: column;
}

.panel {
    border: 2px solid #3f3f46;
}

.panel-tree {
    height: 948px;
    border-bottom: 0;
    display: flex;
    flex-direction: column;
}

.panel-head {
    height: 47px;
    padding-bottom: 1px;
    display: flex;
    align-items: center;
    padding-left: 8px;
}

.panel-head-props {
    height: 43px;
    flex: none;
}

.panel-title {
    flex: none;
    color: #d0d0d0;
    padding-bottom: 2px;
}

.panel-title-tree {
    width: 216px;
}

.panel-head .dots {
    flex: 1;
    margin-left: 14px;
}

.panel-head .head-tri { margin-left: 16px; }
.panel-head .head-pin { margin-left: 16px; }
.panel-head .head-x { margin-left: 16px; margin-right: 15px; }

.tree-tools {
    height: 50px;
    display: flex;
    align-items: center;
}

.tb-home { margin-left: 105px; }
.tb-sync { margin-left: 18px; }
.tb-drop1 { margin-left: 12px; }
.tb-sep {
    width: 2px;
    height: 40px;
    background-color: #434346;
    flex: none;
}
.tb-sep1 { margin-left: 14px; }
.tb-clock { margin-left: 22px; }
.tb-drop2 { margin-left: 13px; }
.tb-arrows { margin-left: 17px; }
.tb-copy { margin-left: 20px; }
.tb-doc { margin-left: 18px; }
.tb-sep2 { margin-left: 15px; }
.tb-code { margin-left: 15px; }
.tb-wrench { margin-left: 19px; }

.tb-focus {
    margin-left: 8px;
    width: 44px;
    height: 48px;
    border: 2px solid #2a72b5;
    display: flex;
    align-items: center;
    padding-left: 6px;
}

.tree-search {
    height: 42px;
    margin-top: 3px;
    background-color: #333337;
    display: flex;
    align-items: center;
    padding-left: 16px;
    position: relative;
}

.search-hint {
    width: 629px;
    color: #999;
    padding-bottom: 3px;
    white-space: nowrap;
}

.i-find {
    position: absolute;
    left: 634px;
    top: 6px;
}

.find-drop {
    position: absolute;
    left: 674px;
    top: 15px;
}

.tree {
    flex: 1;
    margin-top: 4px;
    background-color: #252526;
    overflow: hidden;
}

.row {
    height: 36px;
    display: flex;
    align-items: center;
    white-space: nowrap;
    color: #e4e4e4;
}

.row-solution {
    padding-left: 71px;
}

.row-project {
    padding-left: 101px;
    font-weight: 700;
}

.row-folder {
    padding-left: 99px;
}

.ficon {
    width: 30px;
    margin-right: 8px;
}

.row-file {
    padding-left: 93px;
}

.tw { margin-right: 33px; }
.fi { margin-right: 13px; }

.fi-cpp {
    margin-left: -1px;
    margin-right: 12px;
}

.row-active {
    background-color: #3f3f46;
}

.side-tabs {
    height: 55px;
    display: flex;
    align-items: flex-start;
}

.side-tab {
    height: 41px;
    line-height: 39px;
    padding: 0 13px;
    color: #d0d0d0;
    white-space: nowrap;
}

.side-tab-on {
    width: 238px;
    padding-left: 10px;
    color: #1c97ea;
    background-color: #252526;
    border: 2px solid #3f3f46;
    border-top: 0;
}

.panel-props {
    height: 713px;
    display: flex;
    flex-direction: column;
}

.props-combo {
    height: 36px;
    background-color: #333337;
    display: flex;
    justify-content: flex-end;
    align-items: center;
    padding-right: 18px;
}

.props-tools {
    height: 52px;
    display: flex;
    align-items: center;
}

.pt-on {
    margin-left: 3px;
    width: 46px;
    height: 43px;
    border: 2px solid #2a72b5;
    display: flex;
    align-items: center;
    justify-content: center;
}

.pt-az { margin-left: 10px; }
.pt-sep { margin-left: 10px; height: 44px; }
.pt-key { margin-left: 12px; }

.az-text {
    font-family: "Liberation Sans", sans-serif;
    font-size: 15px;
    font-weight: 700;
    fill: #c8c8c8;
}

.props-grid {
    height: 454px;
    background-color: #252526;
    border-bottom: 1px solid #333337;
}

.props-desc {
    flex: 1;
    background-color: #252526;
}

/* ---------- blue status bar ---------- */

.statusbar {
    height: 47px;
    padding-bottom: 3px;
    background-color: #007acc;
    display: flex;
    align-items: center;
    color: #fff;
    font-size: 23px;
    padding-left: 8px;
}

.build-ok {
    margin-left: 17px;
    width: 2571px;
}

.scm {
    margin-left: 21px;
    width: 192px;
    font-size: 24px;
    white-space: nowrap;
}

.scm-tri { margin-left: 13px; }

.bell {
    margin-left: 40px;
    position: relative;
}

.bell-badge {
    position: absolute;
    left: 14px;
    top: 6px;
    width: 24px;
    height: 24px;
    border-radius: 50%;
    background-color: #d81e1e;
    font-size: 18px;
    line-height: 24px;
    text-align: center;
}

/* ---------- windows taskbar ---------- */

.taskbar {
    height: 80px;
    padding-bottom: 2px;
    display: flex;
    align-items: center;
    background: linear-gradient(90deg, #2d3034 0%, #34363a 30%, #3d3e41 60%, #23272d 67%, #2c2a2e 75%, #3a2e2c 90%, #33292b 100%);
    color: #fff;
}

.tk-start { margin-left: 30px; }

.tk-search {
    width: 688px;
    height: 78px;
    margin-left: 32px;
    background-color: #f2f2f2;
    border-top: 2px solid #c8d4de;
    border-bottom: 2px solid #c8d4de;
    display: flex;
    align-items: center;
    padding-left: 24px;
    color: #333;
    font-size: 32px;
}

.tk-search span {
    margin-left: 26px;
}

.tk-cortana { margin-left: 34px; }
.tk-view { margin-left: 66px; }

.tk-app {
    width: 88px;
    height: 80px;
    flex: none;
    display: flex;
    align-items: center;
    justify-content: center;
    position: relative;
}

.tk-open::after {
    content: "";
    position: absolute;
    left: 6px;
    right: 6px;
    bottom: -2px;
    height: 4px;
    background-color: #99ebf0;
}

.tk-edge { margin-left: 49px; width: 76px; }
.tk-files { margin-left: 20px; width: 80px; }
.tk-wechat { margin-left: 15px; }
.tk-qq { margin-left: 7px; }
.tk-code { margin-left: 12px; }
.tk-vs { margin-left: 8px; width: 92px; }
.tk-py { margin-left: 8px; }
.tk-hex { margin-left: 12px; }
.tk-cmd { margin-left: 12px; width: 80px; }
.tk-win { margin-left: 14px; }

.tk-active {
    background: linear-gradient(180deg, transparent 0, transparent 31px, #4e5257 31px);
}

.tk-active::after {
    left: 0;
    right: 0;
}

.pc-text {
    font-family: "Liberation Sans", sans-serif;
    font-size: 17px;
    font-weight: 700;
    fill: #fff;
}

.cmd-text {
    font-family: "Liberation Mono", monospace;
    font-size: 11px;
    fill: #fff;
}

.tray {
    margin-left: 361px;
    display: flex;
    align-items: center;
}

.tr-bat { margin-left: 37px; }
.tr-wifi { margin-left: 37px; }
.tr-vol { margin-left: 31px; }
.tr-pen { margin-left: 43px; }

.tr-en {
    margin-left: 30px;
    font-size: 30px;
}

.tr-pin {
    margin-left: 27px;
    width: 30px;
    height: 34px;
    background-color: #fff;
    color: #000;
    font-size: 26px;
    line-height: 34px;
    text-align: center;
}

.clock {
    width: 140px;
    margin-left: 24px;
    display: flex;
    flex-direction: column;
    align-items: center;
    font-size: 25px;
    line-height: 37px;
}

.tr-note { margin-left: 27px; }

/* ---------- program window on top ---------- */

.app-window {
    position: absolute;
    left: 20px;
    top: 2px;
    width: 2370px;
    height: 982px;
    box-shadow: -2px 2px 4px rgba(0, 0, 0, 0.45);
}

.win-title {
    height: 60px;
    padding-bottom: 2px;
    background-color: #fff;
    display: flex;
    align-items: center;
    padding-left: 16px;
}

.win-name {
    margin-left: 4px;
    width: 2077px;
    color: #999;
    font-size: 24px;
}

.wb-max { margin-left: 72px; }
.wb-close { margin-left: 73px; }

.canvas {
    height: 922px;
    background-color: #c0c0c0;
    position: relative;
    display: flex;
    justify-content: flex-end;
    align-items: flex-start;
}

.next-btn {
    width: 276px;
    height: 45px;
    padding: 0;
    background-color: #c0c0c0;
    border-style: solid;
    border-width: 3px;
    border-color: #f0f0f0 #000 #000 #f0f0f0;
    box-shadow: inset -3px -3px 0 #808080;
    font-family: "Liberation Sans", sans-serif;
    font-size: 28px;
    color: #111;
}

.tree-draw {
    position: absolute;
    left: 0;
    top: 0;
    width: 2370px;
    height: 922px;
}

.edges line {
    stroke: #000;
    stroke-width: 1.6;
    shape-rendering: crispEdges;
}

.nodes polygon {
    fill: #00ffff;
}
```
